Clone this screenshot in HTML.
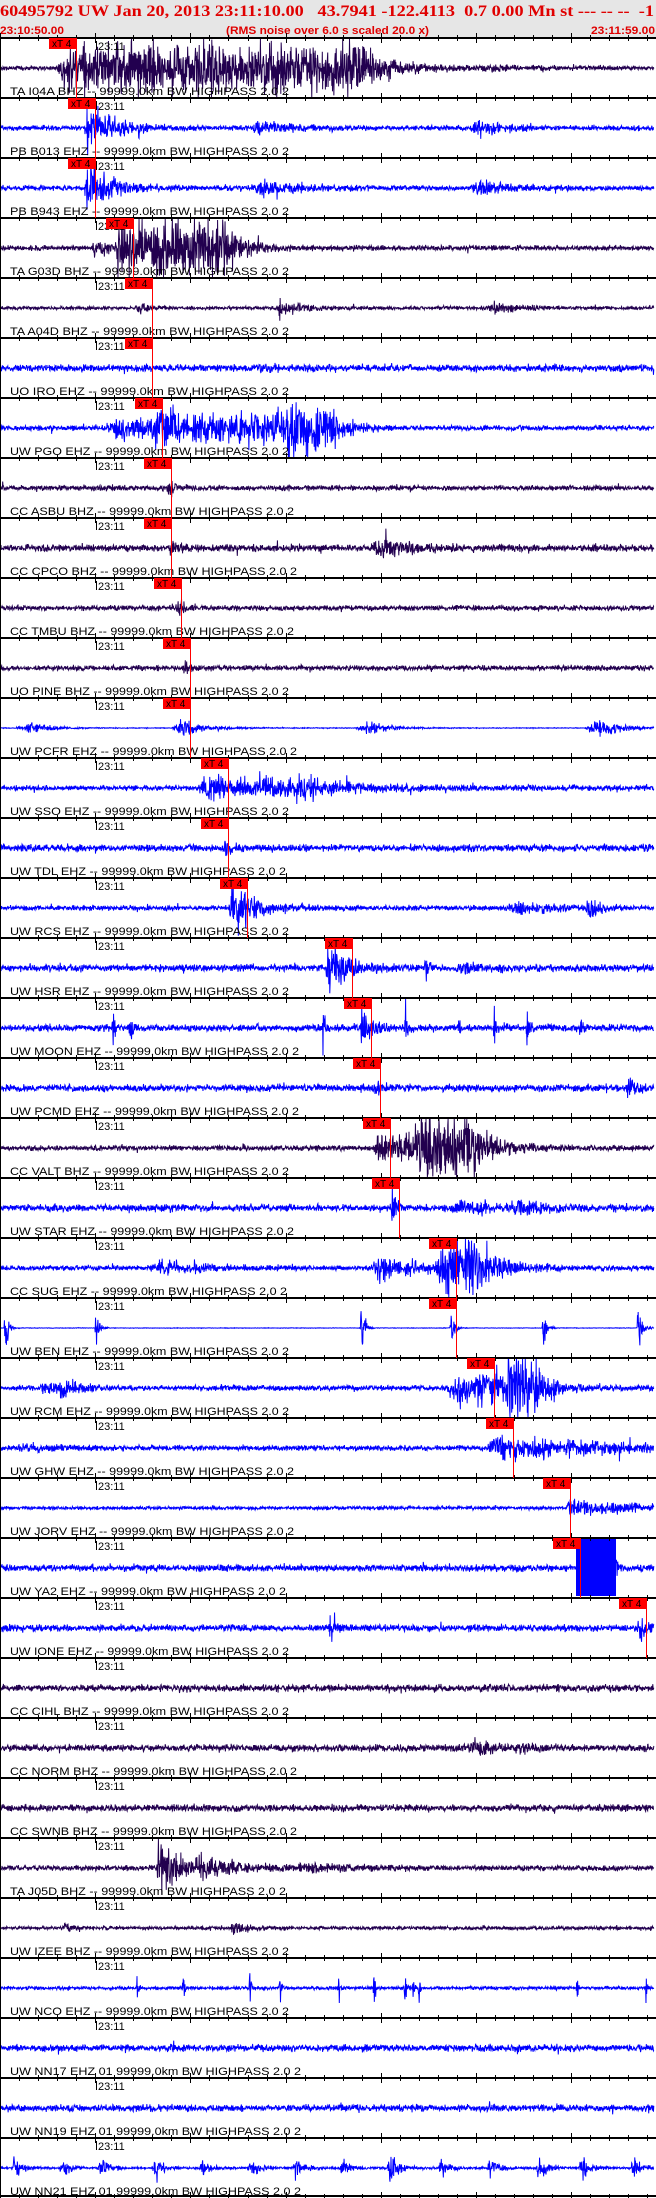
<!DOCTYPE html>
<html><head><meta charset="utf-8"><style>
html,body{margin:0;padding:0;background:#fff;}
svg{display:block}
.h1{font-family:"Liberation Serif",serif;font-weight:bold;font-size:16px;fill:#e00000}
.h2{font-family:"Liberation Sans",sans-serif;font-weight:bold;font-size:11px;fill:#e00000}
.lb{font-family:"Liberation Sans",sans-serif;font-size:11px;fill:#000}
.tm{font-family:"Liberation Sans",sans-serif;font-size:11px;fill:#000}
.xt{font-family:"Liberation Sans",sans-serif;font-size:10px;fill:#000}
</style></head><body>
<svg id="s" width="656" height="2198" xmlns="http://www.w3.org/2000/svg">
<rect x="0" y="0" width="656" height="37" fill="#e6e6e6"/>
<text class="h1" x="0" y="16" textLength="654" lengthAdjust="spacingAndGlyphs" xml:space="preserve">60495792 UW Jan 20, 2013 23:11:10.00   43.7941 -122.4113  0.7 0.00 Mn st --- -- --  -1</text>
<text class="h2" x="0" y="34" textLength="64" lengthAdjust="spacingAndGlyphs">23:10:50.00</text>
<text class="h2" x="226" y="34" textLength="203" lengthAdjust="spacingAndGlyphs">(RMS noise over 6.0 s scaled 20.0 x)</text>
<text class="h2" x="591" y="34" textLength="64" lengthAdjust="spacingAndGlyphs">23:11:59.00</text>
<g id="waves"></g>
<g id="grid"></g>
<g id="labels">
<g transform="translate(0,38)"><text class="tm" x="98" y="12">23:11</text><text class="lb" x="10" y="57" textLength="279" lengthAdjust="spacingAndGlyphs">TA I04A BHZ -- 99999.0km BW  HIGHPASS  2.0  2</text></g>
<g transform="translate(0,98)"><text class="tm" x="98" y="12">23:11</text><text class="lb" x="10" y="57" textLength="279" lengthAdjust="spacingAndGlyphs">PB B013 EHZ -- 99999.0km BW  HIGHPASS  2.0  2</text></g>
<g transform="translate(0,158)"><text class="tm" x="98" y="12">23:11</text><text class="lb" x="10" y="57" textLength="279" lengthAdjust="spacingAndGlyphs">PB B943 EHZ -- 99999.0km BW  HIGHPASS  2.0  2</text></g>
<g transform="translate(0,218)"><text class="tm" x="98" y="12">23:11</text><text class="lb" x="10" y="57" textLength="279" lengthAdjust="spacingAndGlyphs">TA G03D BHZ -- 99999.0km BW  HIGHPASS  2.0  2</text></g>
<g transform="translate(0,278)"><text class="tm" x="98" y="12">23:11</text><text class="lb" x="10" y="57" textLength="279" lengthAdjust="spacingAndGlyphs">TA A04D BHZ -- 99999.0km BW  HIGHPASS  2.0  2</text></g>
<g transform="translate(0,338)"><text class="tm" x="98" y="12">23:11</text><text class="lb" x="10" y="57" textLength="279" lengthAdjust="spacingAndGlyphs">UO IRO EHZ -- 99999.0km BW  HIGHPASS  2.0  2</text></g>
<g transform="translate(0,398)"><text class="tm" x="98" y="12">23:11</text><text class="lb" x="10" y="57" textLength="279" lengthAdjust="spacingAndGlyphs">UW PGO EHZ -- 99999.0km BW  HIGHPASS  2.0  2</text></g>
<g transform="translate(0,458)"><text class="tm" x="98" y="12">23:11</text><text class="lb" x="10" y="57" textLength="284" lengthAdjust="spacingAndGlyphs">CC ASBU BHZ -- 99999.0km BW  HIGHPASS  2.0  2</text></g>
<g transform="translate(0,518)"><text class="tm" x="98" y="12">23:11</text><text class="lb" x="10" y="57" textLength="287" lengthAdjust="spacingAndGlyphs">CC CPCO BHZ -- 99999.0km BW  HIGHPASS  2.0  2</text></g>
<g transform="translate(0,578)"><text class="tm" x="98" y="12">23:11</text><text class="lb" x="10" y="57" textLength="284" lengthAdjust="spacingAndGlyphs">CC TMBU BHZ -- 99999.0km BW  HIGHPASS  2.0  2</text></g>
<g transform="translate(0,638)"><text class="tm" x="98" y="12">23:11</text><text class="lb" x="10" y="57" textLength="279" lengthAdjust="spacingAndGlyphs">UO PINE BHZ -- 99999.0km BW  HIGHPASS  2.0  2</text></g>
<g transform="translate(0,698)"><text class="tm" x="98" y="12">23:11</text><text class="lb" x="10" y="57" textLength="287" lengthAdjust="spacingAndGlyphs">UW PCFR EHZ -- 99999.0km BW  HIGHPASS  2.0  2</text></g>
<g transform="translate(0,758)"><text class="tm" x="98" y="12">23:11</text><text class="lb" x="10" y="57" textLength="279" lengthAdjust="spacingAndGlyphs">UW SSO EHZ -- 99999.0km BW  HIGHPASS  2.0  2</text></g>
<g transform="translate(0,818)"><text class="tm" x="98" y="12">23:11</text><text class="lb" x="10" y="57" textLength="276" lengthAdjust="spacingAndGlyphs">UW TDL EHZ -- 99999.0km BW  HIGHPASS  2.0  2</text></g>
<g transform="translate(0,878)"><text class="tm" x="98" y="12">23:11</text><text class="lb" x="10" y="57" textLength="279" lengthAdjust="spacingAndGlyphs">UW RCS EHZ -- 99999.0km BW  HIGHPASS  2.0  2</text></g>
<g transform="translate(0,938)"><text class="tm" x="98" y="12">23:11</text><text class="lb" x="10" y="57" textLength="279" lengthAdjust="spacingAndGlyphs">UW HSR EHZ -- 99999.0km BW  HIGHPASS  2.0  2</text></g>
<g transform="translate(0,998)"><text class="tm" x="98" y="12">23:11</text><text class="lb" x="10" y="57" textLength="289" lengthAdjust="spacingAndGlyphs">UW MOON EHZ -- 99999.0km BW  HIGHPASS  2.0  2</text></g>
<g transform="translate(0,1058)"><text class="tm" x="98" y="12">23:11</text><text class="lb" x="10" y="57" textLength="289" lengthAdjust="spacingAndGlyphs">UW PCMD EHZ -- 99999.0km BW  HIGHPASS  2.0  2</text></g>
<g transform="translate(0,1118)"><text class="tm" x="98" y="12">23:11</text><text class="lb" x="10" y="57" textLength="279" lengthAdjust="spacingAndGlyphs">CC VALT BHZ -- 99999.0km BW  HIGHPASS  2.0  2</text></g>
<g transform="translate(0,1178)"><text class="tm" x="98" y="12">23:11</text><text class="lb" x="10" y="57" textLength="284" lengthAdjust="spacingAndGlyphs">UW STAR EHZ -- 99999.0km BW  HIGHPASS  2.0  2</text></g>
<g transform="translate(0,1238)"><text class="tm" x="98" y="12">23:11</text><text class="lb" x="10" y="57" textLength="277" lengthAdjust="spacingAndGlyphs">CC SUG EHZ -- 99999.0km BW  HIGHPASS  2.0  2</text></g>
<g transform="translate(0,1298)"><text class="tm" x="98" y="12">23:11</text><text class="lb" x="10" y="57" textLength="279" lengthAdjust="spacingAndGlyphs">UW BEN EHZ -- 99999.0km BW  HIGHPASS  2.0  2</text></g>
<g transform="translate(0,1358)"><text class="tm" x="98" y="12">23:11</text><text class="lb" x="10" y="57" textLength="279" lengthAdjust="spacingAndGlyphs">UW RCM EHZ -- 99999.0km BW  HIGHPASS  2.0  2</text></g>
<g transform="translate(0,1418)"><text class="tm" x="98" y="12">23:11</text><text class="lb" x="10" y="57" textLength="284" lengthAdjust="spacingAndGlyphs">UW GHW EHZ -- 99999.0km BW  HIGHPASS  2.0  2</text></g>
<g transform="translate(0,1478)"><text class="tm" x="98" y="12">23:11</text><text class="lb" x="10" y="57" textLength="284" lengthAdjust="spacingAndGlyphs">UW JORV EHZ -- 99999.0km BW  HIGHPASS  2.0  2</text></g>
<g transform="translate(0,1538)"><text class="tm" x="98" y="12">23:11</text><text class="lb" x="10" y="57" textLength="276" lengthAdjust="spacingAndGlyphs">UW YA2 EHZ -- 99999.0km BW  HIGHPASS  2.0  2</text></g>
<g transform="translate(0,1598)"><text class="tm" x="98" y="12">23:11</text><text class="lb" x="10" y="57" textLength="279" lengthAdjust="spacingAndGlyphs">UW IONE EHZ -- 99999.0km BW  HIGHPASS  2.0  2</text></g>
<g transform="translate(0,1658)"><text class="tm" x="98" y="12">23:11</text><text class="lb" x="10" y="57" textLength="279" lengthAdjust="spacingAndGlyphs">CC CIHL BHZ -- 99999.0km BW  HIGHPASS  2.0  2</text></g>
<g transform="translate(0,1718)"><text class="tm" x="98" y="12">23:11</text><text class="lb" x="10" y="57" textLength="287" lengthAdjust="spacingAndGlyphs">CC NORM BHZ -- 99999.0km BW  HIGHPASS  2.0  2</text></g>
<g transform="translate(0,1778)"><text class="tm" x="98" y="12">23:11</text><text class="lb" x="10" y="57" textLength="287" lengthAdjust="spacingAndGlyphs">CC SWNB BHZ -- 99999.0km BW  HIGHPASS  2.0  2</text></g>
<g transform="translate(0,1838)"><text class="tm" x="98" y="12">23:11</text><text class="lb" x="10" y="57" textLength="276" lengthAdjust="spacingAndGlyphs">TA J05D BHZ -- 99999.0km BW  HIGHPASS  2.0  2</text></g>
<g transform="translate(0,1898)"><text class="tm" x="98" y="12">23:11</text><text class="lb" x="10" y="57" textLength="279" lengthAdjust="spacingAndGlyphs">UW IZEE BHZ -- 99999.0km BW  HIGHPASS  2.0  2</text></g>
<g transform="translate(0,1958)"><text class="tm" x="98" y="12">23:11</text><text class="lb" x="10" y="57" textLength="279" lengthAdjust="spacingAndGlyphs">UW NCO EHZ -- 99999.0km BW  HIGHPASS  2.0  2</text></g>
<g transform="translate(0,2018)"><text class="tm" x="98" y="12">23:11</text><text class="lb" x="10" y="57" textLength="291" lengthAdjust="spacingAndGlyphs">UW NN17 EHZ 01 99999.0km BW  HIGHPASS  2.0  2</text></g>
<g transform="translate(0,2078)"><text class="tm" x="98" y="12">23:11</text><text class="lb" x="10" y="57" textLength="291" lengthAdjust="spacingAndGlyphs">UW NN19 EHZ 01 99999.0km BW  HIGHPASS  2.0  2</text></g>
<g transform="translate(0,2138)"><text class="tm" x="98" y="12">23:11</text><text class="lb" x="10" y="57" textLength="291" lengthAdjust="spacingAndGlyphs">UW NN21 EHZ 01 99999.0km BW  HIGHPASS  2.0  2</text></g>
</g>
<g id="marks">
<g transform="translate(76,38)"><line x1="0.5" y1="0" x2="0.5" y2="60" stroke="#f00"/><rect x="-27" y="0" width="27" height="11" fill="#f00"/><text class="xt" x="-24" y="9">xT 4</text></g>
<g transform="translate(95,98)"><line x1="0.5" y1="0" x2="0.5" y2="60" stroke="#f00"/><rect x="-27" y="0" width="27" height="11" fill="#f00"/><text class="xt" x="-24" y="9">xT 4</text></g>
<g transform="translate(95,158)"><line x1="0.5" y1="0" x2="0.5" y2="60" stroke="#f00"/><rect x="-27" y="0" width="27" height="11" fill="#f00"/><text class="xt" x="-24" y="9">xT 4</text></g>
<g transform="translate(133,218)"><line x1="0.5" y1="0" x2="0.5" y2="60" stroke="#f00"/><rect x="-27" y="0" width="27" height="11" fill="#f00"/><text class="xt" x="-24" y="9">xT 4</text></g>
<g transform="translate(152,278)"><line x1="0.5" y1="0" x2="0.5" y2="60" stroke="#f00"/><rect x="-27" y="0" width="27" height="11" fill="#f00"/><text class="xt" x="-24" y="9">xT 4</text></g>
<g transform="translate(152,338)"><line x1="0.5" y1="0" x2="0.5" y2="60" stroke="#f00"/><rect x="-27" y="0" width="27" height="11" fill="#f00"/><text class="xt" x="-24" y="9">xT 4</text></g>
<g transform="translate(162,398)"><line x1="0.5" y1="0" x2="0.5" y2="60" stroke="#f00"/><rect x="-27" y="0" width="27" height="11" fill="#f00"/><text class="xt" x="-24" y="9">xT 4</text></g>
<g transform="translate(171,458)"><line x1="0.5" y1="0" x2="0.5" y2="60" stroke="#f00"/><rect x="-27" y="0" width="27" height="11" fill="#f00"/><text class="xt" x="-24" y="9">xT 4</text></g>
<g transform="translate(171,518)"><line x1="0.5" y1="0" x2="0.5" y2="60" stroke="#f00"/><rect x="-27" y="0" width="27" height="11" fill="#f00"/><text class="xt" x="-24" y="9">xT 4</text></g>
<g transform="translate(181,578)"><line x1="0.5" y1="0" x2="0.5" y2="60" stroke="#f00"/><rect x="-27" y="0" width="27" height="11" fill="#f00"/><text class="xt" x="-24" y="9">xT 4</text></g>
<g transform="translate(190,638)"><line x1="0.5" y1="0" x2="0.5" y2="60" stroke="#f00"/><rect x="-27" y="0" width="27" height="11" fill="#f00"/><text class="xt" x="-24" y="9">xT 4</text></g>
<g transform="translate(190,698)"><line x1="0.5" y1="0" x2="0.5" y2="60" stroke="#f00"/><rect x="-27" y="0" width="27" height="11" fill="#f00"/><text class="xt" x="-24" y="9">xT 4</text></g>
<g transform="translate(228,758)"><line x1="0.5" y1="0" x2="0.5" y2="60" stroke="#f00"/><rect x="-27" y="0" width="27" height="11" fill="#f00"/><text class="xt" x="-24" y="9">xT 4</text></g>
<g transform="translate(228,818)"><line x1="0.5" y1="0" x2="0.5" y2="60" stroke="#f00"/><rect x="-27" y="0" width="27" height="11" fill="#f00"/><text class="xt" x="-24" y="9">xT 4</text></g>
<g transform="translate(247,878)"><line x1="0.5" y1="0" x2="0.5" y2="60" stroke="#f00"/><rect x="-27" y="0" width="27" height="11" fill="#f00"/><text class="xt" x="-24" y="9">xT 4</text></g>
<g transform="translate(352,938)"><line x1="0.5" y1="0" x2="0.5" y2="60" stroke="#f00"/><rect x="-27" y="0" width="27" height="11" fill="#f00"/><text class="xt" x="-24" y="9">xT 4</text></g>
<g transform="translate(371,998)"><line x1="0.5" y1="0" x2="0.5" y2="60" stroke="#f00"/><rect x="-27" y="0" width="27" height="11" fill="#f00"/><text class="xt" x="-24" y="9">xT 4</text></g>
<g transform="translate(380,1058)"><line x1="0.5" y1="0" x2="0.5" y2="60" stroke="#f00"/><rect x="-27" y="0" width="27" height="11" fill="#f00"/><text class="xt" x="-24" y="9">xT 4</text></g>
<g transform="translate(390,1118)"><line x1="0.5" y1="0" x2="0.5" y2="60" stroke="#f00"/><rect x="-27" y="0" width="27" height="11" fill="#f00"/><text class="xt" x="-24" y="9">xT 4</text></g>
<g transform="translate(399,1178)"><line x1="0.5" y1="0" x2="0.5" y2="60" stroke="#f00"/><rect x="-27" y="0" width="27" height="11" fill="#f00"/><text class="xt" x="-24" y="9">xT 4</text></g>
<g transform="translate(456,1238)"><line x1="0.5" y1="0" x2="0.5" y2="60" stroke="#f00"/><rect x="-27" y="0" width="27" height="11" fill="#f00"/><text class="xt" x="-24" y="9">xT 4</text></g>
<g transform="translate(456,1298)"><line x1="0.5" y1="0" x2="0.5" y2="60" stroke="#f00"/><rect x="-27" y="0" width="27" height="11" fill="#f00"/><text class="xt" x="-24" y="9">xT 4</text></g>
<g transform="translate(494,1358)"><line x1="0.5" y1="0" x2="0.5" y2="60" stroke="#f00"/><rect x="-27" y="0" width="27" height="11" fill="#f00"/><text class="xt" x="-24" y="9">xT 4</text></g>
<g transform="translate(513,1418)"><line x1="0.5" y1="0" x2="0.5" y2="60" stroke="#f00"/><rect x="-27" y="0" width="27" height="11" fill="#f00"/><text class="xt" x="-24" y="9">xT 4</text></g>
<g transform="translate(570,1478)"><line x1="0.5" y1="0" x2="0.5" y2="60" stroke="#f00"/><rect x="-27" y="0" width="27" height="11" fill="#f00"/><text class="xt" x="-24" y="9">xT 4</text></g>
<g transform="translate(580,1538)"><line x1="0.5" y1="0" x2="0.5" y2="60" stroke="#f00"/><rect x="-27" y="0" width="27" height="11" fill="#f00"/><text class="xt" x="-24" y="9">xT 4</text></g>
<g transform="translate(646,1598)"><line x1="0.5" y1="0" x2="0.5" y2="60" stroke="#f00"/><rect x="-27" y="0" width="27" height="11" fill="#f00"/><text class="xt" x="-24" y="9">xT 4</text></g>
</g>
</svg>
<script>
(function(){
var NS="http://www.w3.org/2000/svg";
var seed=12345;function rnd(){seed|=0;seed=seed+0x6D2B79F5|0;var t=Math.imul(seed^seed>>>15,1|seed);t=t+Math.imul(t^t>>>7,61|t)^t;return((t^t>>>14)>>>0)/4294967296;}
function g(){return (rnd()+rnd()+rnd()-1.5)/1.5;}
var D="#22004f",B="#0000ff";
var T=[
[D,2.5,[[65,28,25,8,355],[360,4,60,1],[490,3,25,8]]],
[B,3,[[88,30,22,4],[260,8,30,10],[480,7,25,10]]],
[B,3,[[88,30,22,4],[260,9,35,10],[480,7,25,10]]],
[D,3,[[95,8,20,4],[120,30,20,5,225]]],
[D,2,[[140,7,10,5],[280,8,25,5],[495,6,25,8]]],
[B,4,[[260,3,20,5]]],
[B,3,[[115,10,20,8,160],[160,14,12,5,280],[285,24,15,10,330]]],
[D,3,[[168,12,6,2]]],
[D,4,[[170,4,10,1],[380,10,30,10]]],
[D,3,[[178,10,6,2]]],
[D,3,[[185,10,6,2]]],
[B,0.4,[[30,7,20,15],[180,10,25,8],[370,8,20,15],[600,12,20,15]]],
[B,3,[[205,10,25,8,300],[300,5,100,10]]],
[B,4,[[226,6,6,2]]],
[B,3,[[232,30,22,3],[520,6,30,15],[590,8,15,5]]],
[B,4,[[330,28,20,5],[425,30,2,1],[460,5,20,5]]],
[B,4,[[113,24,2,1],[130,24,2,1],[323,25,2,1],[362,28,8,2],[405,25,2,1],[458,25,2,1],[494,22,2,1],[527,22,2,1],[580,25,2,1]]],
[B,4,[[375,6,10,4],[628,9,10,4]]],
[D,3,[[378,14,20,5,430],[430,30,25,20,470]]],
[B,4,[[392,32,4,1],[460,8,25,10],[520,10,20,8]]],
[B,3,[[160,10,30,10],[380,14,40,10],[445,30,25,10,470]]],
[B,0.3,[[5,30,3,1],[96,30,3,1],[361,30,3,1],[451,28,3,1],[543,30,3,1],[638,30,4,1]]],
[B,3,[[45,6,15,5],[62,14,12,3],[455,16,20,8,500],[510,36,15,5,530]]],
[B,3,[[20,4,40,5],[495,12,120,10]]],
[B,2,[[570,10,70,5]]],
[B,4,[[615,30,2,1]]],
[B,4,[[330,10,6,2],[640,20,6,3]]],
[D,4,[]],
[D,4,[[475,10,20,8],[520,6,10,4]]],
[D,4,[]],
[D,3,[[158,34,25,1],[200,8,40,5],[300,5,40,5]]],
[D,2,[[65,6,8,3],[233,10,15,2]]],
[B,2,[[137,26,1,1],[183,26,1,1],[250,26,1,1],[280,26,1,1],[339,26,1,1],[374,26,1,1],[405,24,1,1],[413,24,1,1],[419,24,1,1],[577,24,1,1],[646,24,1,1]]],
[B,4,[]],
[B,4,[]],
[B,1.2,[[14,13,8,2],[62,10,8,3],[101,12,8,3],[155,12,8,3],[202,12,8,3],[251,12,8,3],[296,13,8,3],[342,12,8,3],[390,16,8,3],[441,12,8,3],[490,12,8,3],[539,14,8,3],[582,13,8,3],[633,13,8,3]]]
];
var wv=document.getElementById("waves");
for(var k=0;k<T.length;k++){
  var top=38+60*k,c=top+30,t=T[k],ev=t[2],d="",first=true;
  for(var x=1;x<=654;x+=0.34){
    var a=t[1];
    for(var e=0;e<ev.length;e++){var x0=ev[e][0],am=ev[e][1],dc=ev[e][2],r=ev[e][3],en=ev[e][4]||x0;
      if(x<x0-r)continue;
      if(x<x0)a+=am*(1-(x0-x)/r);else if(x<=en)a+=am;else a+=am*Math.exp(-(x-en)/dc);}
    var v=g()*a*1.2+(rnd()<0.03?g()*a*1.5:0);
    if(v>29)v=29;if(v<-29)v=-29;
    d+=(first?"M":"L")+x.toFixed(2)+" "+(c+v).toFixed(1);first=false;
  }
  var p=document.createElementNS(NS,"path");p.setAttribute("d",d);p.setAttribute("fill","none");p.setAttribute("stroke",t[0]);p.setAttribute("stroke-width","1");wv.appendChild(p);
  if(k==25){var r=document.createElementNS(NS,"rect");r.setAttribute("x",576);r.setAttribute("y",top);r.setAttribute("width",40);r.setAttribute("height",58);r.setAttribute("fill",B);wv.appendChild(r);}
}
var gr=document.getElementById("grid"),gd="";
for(var k=0;k<37;k++){var y=38+60*k;
  if(k==36)y=2197;
  for(var i=0;i<35;i++){var x=Math.round(i*19.04)+0.5;var big=(i%5==0);var h=big?5:3;
    gd+="M"+x+" "+(y-h)+"V"+(y+h);}
  if(k<36)gd+="M96.5 "+(y+3)+"V"+(y+12);
}
var p=document.createElementNS(NS,"path");p.setAttribute("d",gd);p.setAttribute("stroke","#000");p.setAttribute("stroke-width","1");gr.appendChild(p);
for(var k=0;k<37;k++){var y=38+60*k;if(k==36)y=2196;
  var r=document.createElementNS(NS,"rect");r.setAttribute("x",0);r.setAttribute("y",y-1);r.setAttribute("width",656);r.setAttribute("height",2);r.setAttribute("fill","#000");gr.appendChild(r);}
var r=document.createElementNS(NS,"rect");r.setAttribute("x",0);r.setAttribute("y",38);r.setAttribute("width",1);r.setAttribute("height",2160);r.setAttribute("fill","#000");gr.appendChild(r);
})();
</script>
</body></html>
